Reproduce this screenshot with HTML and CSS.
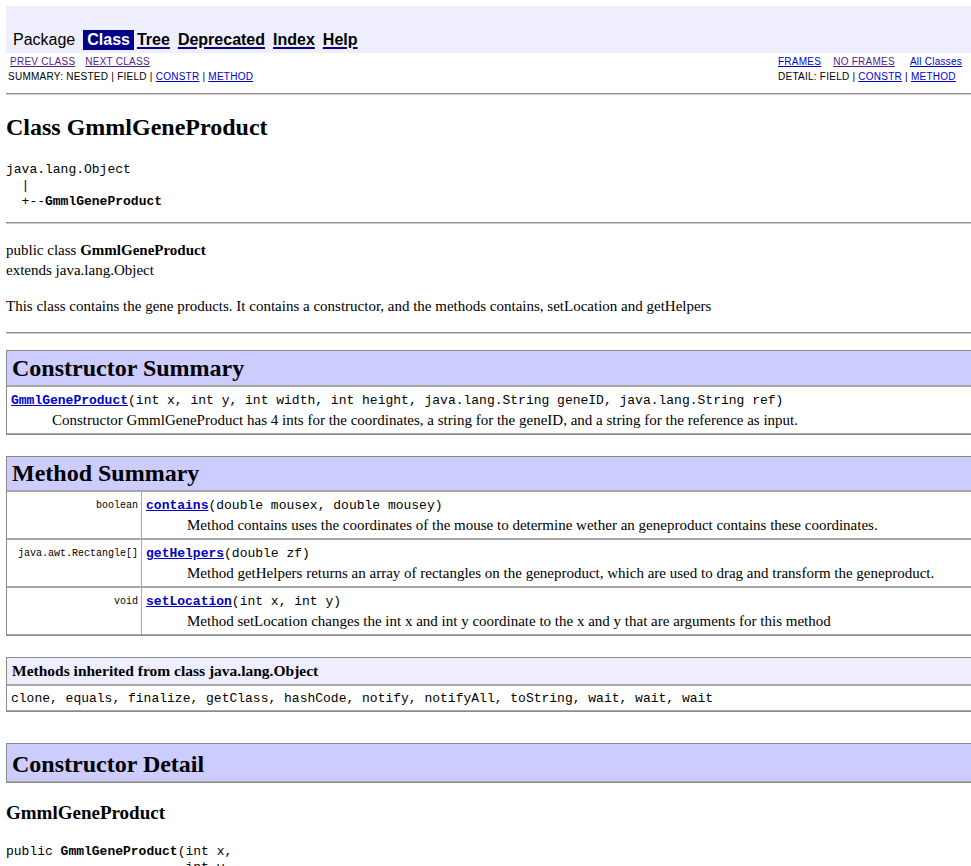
FILE: index.html
```html
<!DOCTYPE html>
<html>
<head>
<meta charset="utf-8">
<title>GmmlGeneProduct</title>
<link rel="stylesheet" href="styles.css">
</head>
<body>
<div class="page">
  <div class="navbar">
    <div class="nav-top">
      <span class="nav-item plain">Package</span>
      <span class="nav-item current">Class</span>
      <a class="nav-item link" href="#"><span>Tree</span></a>
      <a class="nav-item link" href="#"><span>Deprecated</span></a>
      <a class="nav-item link" href="#"><span>Index</span></a>
      <a class="nav-item link" href="#"><span>Help</span></a>
    </div>
  </div>
  <div class="nav-sub">
    <div class="sub-cell"><a class="visited" href="#">PREV CLASS</a><a class="visited gap" href="#">NEXT CLASS</a></div>
    <div class="sub-cell"><a href="#">FRAMES</a><a class="visited gap1" href="#">NO FRAMES</a><a class="gap2" href="#">All Classes</a></div>
    <div class="sub-cell">SUMMARY:&nbsp;NESTED&nbsp;|&nbsp;FIELD&nbsp;|&nbsp;<a href="#">CONSTR</a>&nbsp;|&nbsp;<a href="#">METHOD</a></div>
    <div class="sub-cell">DETAIL:&nbsp;FIELD&nbsp;|&nbsp;<a href="#">CONSTR</a>&nbsp;|&nbsp;<a href="#">METHOD</a></div>
  </div>
  <hr class="rule rule-nav">

  <h2 class="class-title">Class GmmlGeneProduct</h2>
  <pre class="hierarchy">java.lang.Object
  |
  +--<b>GmmlGeneProduct</b></pre>
  <hr class="rule rule-a">

  <div class="decl">
    <div>public class <b>GmmlGeneProduct</b></div>
    <div>extends java.lang.Object</div>
  </div>
  <p class="desc">This class contains the gene products. It contains a constructor, and the methods contains, setLocation and getHelpers</p>
  <hr class="rule rule-b">

  <table class="summary ctor">
    <tr><th class="head">Constructor Summary</th></tr>
    <tr>
      <td class="cell">
        <div class="sig"><a class="member" href="#">GmmlGeneProduct</a>(int&nbsp;x, int&nbsp;y, int&nbsp;width, int&nbsp;height, java.lang.String&nbsp;geneID, java.lang.String&nbsp;ref)</div>
        <div class="info">Constructor GmmlGeneProduct has 4 ints for the coordinates, a string for the geneID, and a string for the reference as input.</div>
      </td>
    </tr>
  </table>

  <table class="summary methods">
    <tr><th class="head" colspan="2">Method Summary</th></tr>
    <tr>
      <td class="type"><code>boolean</code></td>
      <td class="cell">
        <div class="sig"><a class="member" href="#">contains</a>(double&nbsp;mousex, double&nbsp;mousey)</div>
        <div class="info">Method contains uses the coordinates of the mouse to determine wether an geneproduct contains these coordinates.</div>
      </td>
    </tr>
    <tr>
      <td class="type"><code>java.awt.Rectangle[]</code></td>
      <td class="cell">
        <div class="sig"><a class="member" href="#">getHelpers</a>(double&nbsp;zf)</div>
        <div class="info">Method getHelpers returns an array of rectangles on the geneproduct, which are used to drag and transform the geneproduct.</div>
      </td>
    </tr>
    <tr>
      <td class="type"><code>void</code></td>
      <td class="cell">
        <div class="sig"><a class="member" href="#">setLocation</a>(int&nbsp;x, int&nbsp;y)</div>
        <div class="info">Method setLocation changes the int x and int y coordinate to the x and y that are arguments for this method</div>
      </td>
    </tr>
  </table>

  <table class="summary inherited">
    <tr><th class="subhead">Methods inherited from class java.lang.Object</th></tr>
    <tr><td class="plain-cell"><code class="list">clone, equals, finalize, getClass, hashCode, notify, notifyAll, toString, wait, wait, wait</code></td></tr>
  </table>

  <table class="summary detail">
    <tr><th class="head">Constructor Detail</th></tr>
  </table>

  <h3 class="member-title">GmmlGeneProduct</h3>
  <pre class="signature">public <b>GmmlGeneProduct</b>(int&nbsp;x,
                       int&nbsp;y,
                       int&nbsp;width,
                       int&nbsp;height,
                       java.lang.String&nbsp;geneID,
                       java.lang.String&nbsp;ref)</pre>
</div>
</body>
</html>
```

FILE: styles.css
```css
html, body {
  margin: 0;
  padding: 0;
  background: #ffffff;
  overflow: hidden;
}

body {
  font-family: "Liberation Serif", "Times New Roman", serif;
  font-size: 15px;
  color: #000000;
}

.page {
  width: 980px;
  padding: 6px 0 0 6px;
}

a {
  color: #0000cc;
}

a.visited {
  color: #551a8b;
}

/* ---------- navigation bar ---------- */
.navbar {
  background: #eeeeff;
  height: 47px;
  display: flex;
  align-items: flex-end;
}

.nav-top {
  display: flex;
  align-items: center;
  font-family: "Liberation Sans", Arial, sans-serif;
  font-size: 16px;
  margin: 0 0 3px 7px;
  height: 20px;
}

.nav-item {
  line-height: 20px;
}

.nav-item.plain {
  margin-right: 8px;
}

.nav-item.current {
  background: #00008b;
  color: #ffffff;
  font-weight: bold;
  padding: 0 4px;
  height: 20px;
  margin-right: 3px;
}

.nav-item.link {
  color: #00008b;
  font-weight: bold;
  margin-right: 8px;
  text-decoration: underline;
  text-decoration-thickness: 2px;
  text-underline-offset: 2px;
}

.nav-item.link span {
  color: #000000;
}

.nav-sub {
  display: grid;
  grid-template-columns: 770px auto;
  grid-auto-rows: 15px;
  font-family: "Liberation Sans", Arial, sans-serif;
  font-size: 10px;
  letter-spacing: 0.25px;
  line-height: 15px;
  padding-top: 1px;
}

.sub-cell {
  white-space: nowrap;
  padding-left: 2px;
}

.nav-sub .sub-cell:first-child {
  padding-left: 4px;
}

.gap {
  margin-left: 10px;
}

.gap1 {
  margin-left: 12px;
}

.gap2 {
  margin-left: 15px;
}

/* ---------- rules ---------- */
.rule {
  height: 0;
  border: 0;
  border-top: 1px solid #8e8e8e;
  border-bottom: 1px solid #cfcfcf;
  margin: 0;
  width: 966px;
}

.rule-nav {
  margin-top: 9px;
}

.rule-a {
  margin-top: 12px;
}

.rule-b {
  margin-top: 16px;
}

/* ---------- class header ---------- */
.class-title {
  font-size: 24px;
  font-weight: bold;
  margin: 19px 0 0 0;
  line-height: 27px;
}

.hierarchy {
  font-family: "Liberation Mono", "Courier New", monospace;
  font-size: 13px;
  line-height: 16px;
  margin: 21px 0 0 0;
}

.decl {
  margin-top: 16px;
  line-height: 20px;
}

.desc {
  margin: 16px 0 0 0;
  line-height: 20px;
}

/* ---------- summary tables ---------- */
.summary {
  width: 975px;
  border-collapse: separate;
  border-spacing: 0;
  border: 1px solid #8a8a8a;
  border-right: 0;
  margin-top: 21px;
}

.summary th,
.summary td {
  border: 1px solid #a8a8a8;
  border-right: 0;
  text-align: left;
  vertical-align: top;
}

.summary tr:first-child th {
  border-top: 0;
}

.summary td:first-child,
.summary th:first-child {
  border-left: 0;
}

.head {
  background: #ccccff;
  font-size: 24px;
  font-weight: bold;
  line-height: 27px;
  height: 27px;
  padding: 3px 3px 3px 5px;
}

.ctor .head {
  padding-top: 4px;
}

.subhead {
  background: #eeeeff;
  font-size: 15.5px;
  font-weight: bold;
  line-height: 20px;
  padding: 3px 3px 3px 5px;
}

.ctor {
  margin-top: 16px;
}

.cell {
  padding: 5px 3px 3px 4px;
}

.plain-cell {
  padding: 3px 3px 3px 4px;
}

.sig {
  font-family: "Liberation Mono", "Courier New", monospace;
  font-size: 13px;
  line-height: 18px;
  white-space: nowrap;
}

.member {
  font-weight: bold;
}

.info {
  padding-left: 41px;
  line-height: 20px;
}

.type {
  width: 1%;
  white-space: nowrap;
  text-align: right !important;
  padding: 3px;
}

.type code {
  font-family: "Liberation Mono", "Courier New", monospace;
  font-size: 10px;
  line-height: 13px;
  padding-left: 8px;
}

.list {
  font-family: "Liberation Mono", "Courier New", monospace;
  font-size: 13px;
  line-height: 17px;
}

.inherited {
  margin-top: 21px;
}

.detail {
  margin-top: 31px;
}

.detail .head {
  height: 31px;
  line-height: 31px;
  padding-top: 5px;
  padding-bottom: 1px;
}

/* ---------- member detail ---------- */
.member-title {
  font-size: 19px;
  font-weight: bold;
  margin: 19px 0 0 0;
  line-height: 22px;
}

.signature {
  font-family: "Liberation Mono", "Courier New", monospace;
  font-size: 13px;
  line-height: 16px;
  margin: 20px 0 0 0;
}
```
